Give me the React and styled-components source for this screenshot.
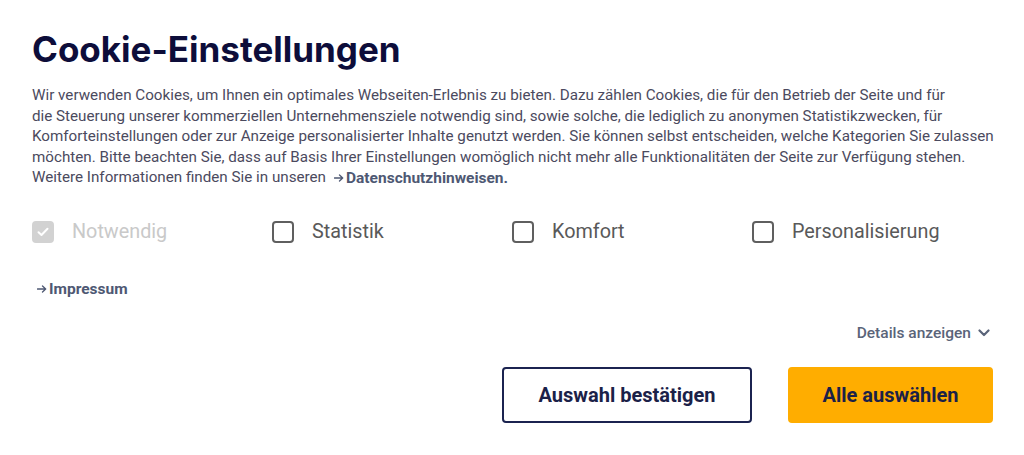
import React, { useState } from "react";
import styled, { createGlobalStyle } from "styled-components";

const GlobalStyle = createGlobalStyle`
  body {
    margin: 0;
    background: #fff;
    font-family: Roboto, "Liberation Sans", sans-serif;
  }
`;

const Dialog = styled.div`
  padding: 27px 31px 30px 32px;
  display: flex;
  flex-direction: column;
`;

const Title = styled.h1`
  margin: 0 0 14px;
  font-family: Inter, "Liberation Sans", sans-serif;
  font-size: 35px;
  font-weight: 700;
  line-height: 44px;
  color: #0d0d3a;
`;

const Intro = styled.p`
  margin: 0;
  font-size: 15.2px;
  line-height: 20.5px;
  color: #4b4a5e;
  white-space: nowrap;
`;

const InlineLink = styled.a`
  display: inline-flex;
  align-items: center;
  gap: 2px;
  font-size: 15.5px;
  font-weight: 700;
  color: #4e5873;
  text-decoration: none;
  margin-left: ${(p) => p.$gap || 0}px;
`;

const Options = styled.div`
  display: grid;
  grid-template-columns: repeat(4, 240px);
  margin-top: 32px;
  height: 22px;
  align-items: center;
`;

const Option = styled.label`
  display: flex;
  align-items: center;
  gap: 18px;
  font-size: 19.8px;
  color: ${(p) => (p.$disabled ? "#c9c9c9" : "#595959")};
  cursor: ${(p) => (p.$disabled ? "default" : "pointer")};
`;

const Box = styled.span`
  width: 22px;
  height: 22px;
  box-sizing: border-box;
  border-radius: 4px;
  border: 2px solid ${(p) => (p.$disabled ? "#d2d2d2" : "#5f5f5f")};
  background: ${(p) => (p.$disabled ? "#d2d2d2" : p.$checked ? "#1b2350" : "#fff")};
  display: flex;
  align-items: center;
  justify-content: center;
  flex-shrink: 0;
`;

const FooterLink = styled.div`
  margin-top: 37px;
  padding-left: 5px;
  line-height: 18px;
`;

const DetailsRow = styled.div`
  display: flex;
  justify-content: flex-end;
  margin-top: 26px;
  padding-right: 3px;
`;

const DetailsToggle = styled.button`
  border: 0;
  background: none;
  padding: 0;
  display: flex;
  align-items: center;
  gap: 7px;
  font-family: Roboto, "Liberation Sans", sans-serif;
  font-size: 15.5px;
  line-height: 18px;
  font-weight: 500;
  color: #5a6479;
  cursor: pointer;
`;

const Actions = styled.div`
  display: flex;
  justify-content: flex-end;
  gap: 36px;
  margin-top: 25px;
`;

const Button = styled.button`
  height: 56px;
  width: ${(p) => p.$width}px;
  box-sizing: border-box;
  border-radius: 4px;
  border: 2px solid ${(p) => (p.$primary ? "#ffad00" : "#1b2350")};
  background: ${(p) => (p.$primary ? "#ffad00" : "#fff")};
  color: #1b2148;
  font-family: Roboto, "Liberation Sans", sans-serif;
  font-size: 20px;
  font-weight: 700;
  cursor: pointer;
`;

const Check = () => (
  <svg width="12" height="10" viewBox="0 0 12 10">
    <path d="M1.5 5.2 L4.5 8 L10.5 1.8" fill="none" stroke="#fff" strokeWidth="2" strokeLinecap="round" strokeLinejoin="round" />
  </svg>
);

const Arrow = () => (
  <svg width="10" height="8" viewBox="0 0 10 8">
    <path d="M0.5 4 H8.5 M5.5 1 L8.7 4 L5.5 7" fill="none" stroke="#4e5873" strokeWidth="1.3" strokeLinecap="round" strokeLinejoin="round" />
  </svg>
);

const Chevron = () => (
  <svg width="12" height="8" viewBox="0 0 12 8">
    <path d="M1.5 1.5 L6 6 L10.5 1.5" fill="none" stroke="#5a6479" strokeWidth="2.2" strokeLinecap="round" strokeLinejoin="round" />
  </svg>
);

const categories = ["Statistik", "Komfort", "Personalisierung"];

const App = () => {
  const [selected, setSelected] = useState({});
  const toggle = (name) => setSelected((s) => ({ ...s, [name]: !s[name] }));

  return (
    <>
      <GlobalStyle />
      <Dialog>
        <Title>Cookie-Einstellungen</Title>
        <Intro>
          Wir verwenden Cookies, um Ihnen ein optimales Webseiten-Erlebnis zu bieten. Dazu zählen Cookies, die für den Betrieb der Seite und für
          <br />
          die Steuerung unserer kommerziellen Unternehmensziele notwendig sind, sowie solche, die lediglich zu anonymen Statistikzwecken, für
          <br />
          Komforteinstellungen oder zur Anzeige personalisierter Inhalte genutzt werden. Sie können selbst entscheiden, welche Kategorien Sie zulassen
          <br />
          möchten. Bitte beachten Sie, dass auf Basis Ihrer Einstellungen womöglich nicht mehr alle Funktionalitäten der Seite zur Verfügung stehen.
          <br />
          Weitere Informationen finden Sie in unseren
          <InlineLink href="#" $gap={8}>
            <Arrow />
            Datenschutzhinweisen.
          </InlineLink>
        </Intro>

        <Options>
          <Option $disabled>
            <Box $disabled>
              <Check />
            </Box>
            Notwendig
          </Option>
          {categories.map((name) => (
            <Option key={name} onClick={() => toggle(name)}>
              <Box $checked={selected[name]}>{selected[name] && <Check />}</Box>
              {name}
            </Option>
          ))}
        </Options>

        <FooterLink>
          <InlineLink href="#">
            <Arrow />
            Impressum
          </InlineLink>
        </FooterLink>

        <DetailsRow>
          <DetailsToggle>
            Details anzeigen
            <Chevron />
          </DetailsToggle>
        </DetailsRow>

        <Actions>
          <Button $width={250}>Auswahl bestätigen</Button>
          <Button $primary $width={205}>Alle auswählen</Button>
        </Actions>
      </Dialog>
    </>
  );
};

export default App;
